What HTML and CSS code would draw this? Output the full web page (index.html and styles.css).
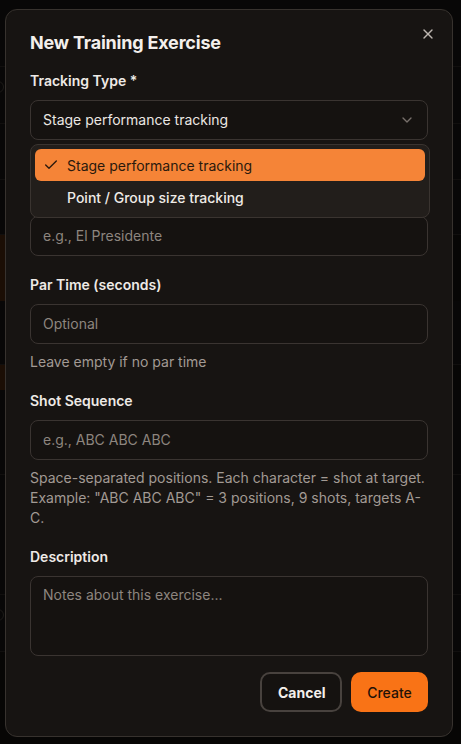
FILE: index.html
```html
<!DOCTYPE html>
<html lang="en">
<head>
<meta charset="utf-8">
<title>New Training Exercise</title>
<link rel="stylesheet" href="styles.css">
</head>
<body>
<div class="page">
  <div class="bg-row h67"></div>
  <div class="bg-row h57"><span class="bg-ring"></span></div>
  <div class="bg-row h56"></div>
  <div class="bg-row h55"></div>
  <div class="bg-row bg-card h66"></div>
  <div class="bg-row h64"></div>
  <div class="bg-row bg-card h25"></div>
  <div class="bg-row h85"></div>
  <div class="bg-row h120"></div>
  <div class="bg-row h57"><span class="bg-ring"></span></div>
</div>

<div class="overlay"></div>

<div class="modal" role="dialog" aria-labelledby="modal-title">
  <button class="close" aria-label="Close">
    <svg width="16" height="16" viewBox="0 0 24 24" fill="none" stroke="currentColor" stroke-width="2" stroke-linecap="round" stroke-linejoin="round"><path d="M18 6 6 18"/><path d="m6 6 12 12"/></svg>
  </button>
  <h2 class="title" id="modal-title">New Training Exercise</h2>

  <div class="form">
    <div class="field">
      <label class="label">Tracking Type *</label>
      <div class="select-wrap">
        <div class="control select">
          <span>Stage performance tracking</span>
          <svg class="chev" width="16" height="16" viewBox="0 0 24 24" fill="none" stroke="currentColor" stroke-width="2" stroke-linecap="round" stroke-linejoin="round"><path d="m6 9 6 6 6-6"/></svg>
        </div>
        <div class="menu">
          <div class="item active">
            <svg class="check" width="16" height="16" viewBox="0 0 24 24" fill="none" stroke="currentColor" stroke-width="2" stroke-linecap="round" stroke-linejoin="round"><path d="M20 6 9 17l-5-5"/></svg>
            <span>Stage performance tracking</span>
          </div>
          <div class="item">
            <span class="icon-space"></span>
            <span>Point / Group size tracking</span>
          </div>
        </div>
      </div>
      <div class="help-space"></div>
    </div>

    <div class="field">
      <div class="label-space"></div>
      <div class="control"><span class="ph">e.g., El Presidente</span></div>
    </div>

    <div class="field">
      <label class="label">Par Time (seconds)</label>
      <div class="control"><span class="ph">Optional</span></div>
      <p class="help">Leave empty if no par time</p>
    </div>

    <div class="field">
      <label class="label">Shot Sequence</label>
      <div class="control"><span class="ph">e.g., ABC ABC ABC</span></div>
      <p class="help">Space-separated positions. Each character = shot at target. Example: "ABC ABC ABC" = 3 positions, 9 shots, targets A-C.</p>
    </div>

    <div class="field">
      <label class="label">Description</label>
      <div class="control textarea"><span class="ph">Notes about this exercise...</span></div>
    </div>
  </div>

  <div class="actions">
    <button class="btn btn-outline">Cancel</button>
    <button class="btn btn-primary">Create</button>
  </div>
</div>
</body>
</html>
```

FILE: styles.css
```css
* { box-sizing: border-box; }

html, body {
  margin: 0;
  padding: 0;
}

body {
  width: 461px;
  height: 744px;
  overflow: hidden;
  background: #0b0a09;
  font-family: Inter, "Noto Sans", "Liberation Sans", sans-serif;
  color: #ede9e5;
}

/* faint page under the overlay */
.page {
  display: flex;
  flex-direction: column;
  width: 100%;
}
.bg-row {
  position: relative;
  width: 100%;
  background: #0d0c0b;
  border-bottom: 1px solid #1b1816;
}
.h67 { height: 67px; }
.h57 { height: 57px; }
.h56 { height: 56px; }
.h55 { height: 55px; }
.h66 { height: 66px; }
.h64 { height: 64px; }
.h25 { height: 25px; }
.h85 { height: 85px; }
.h120 { height: 120px; }
.bg-card {
  width: 200px;
  background: #2a1608;
  border-bottom: 0;
}
.bg-ring {
  position: absolute;
  left: -8px;
  top: 14px;
  width: 12px;
  height: 12px;
  border: 1px solid #2c2825;
  border-radius: 50%;
}

.overlay {
  position: fixed;
  inset: 0;
  background: rgba(0, 0, 0, 0.35);
}

.modal {
  position: fixed;
  left: 5px;
  top: 9px;
  width: 448px;
  height: 728px;
  padding: 24px;
  background: #171412;
  border: 1px solid #37322e;
  border-radius: 12px;
  display: flex;
  flex-direction: column;
}

.close {
  position: absolute;
  top: 16px;
  right: 16px;
  width: 16px;
  height: 16px;
  padding: 0;
  border: 0;
  background: none;
  color: #bdb6b0;
  display: flex;
}

.title {
  margin: 0;
  font-size: 18px;
  line-height: 18px;
  font-weight: 700;
  letter-spacing: -0.2px;
  color: #f3efeb;
}

.form {
  margin-top: 19px;
  display: flex;
  flex-direction: column;
  gap: 19px;
}

.field {
  display: flex;
  flex-direction: column;
}

.label {
  font-size: 14px;
  line-height: 20px;
  font-weight: 600;
  color: #eeeae6;
  margin-bottom: 9px;
}

.label-space {
  height: 20px;
  margin-bottom: 9px;
}

.help-space {
  height: 20px;
  margin-top: 8px;
}

.control {
  height: 40px;
  border: 1px solid #3a3431;
  border-radius: 8px;
  background: #151210;
  padding: 0 12px;
  display: flex;
  align-items: center;
  font-size: 14px;
  line-height: 20px;
  color: #ebe7e3;
}

.control.textarea {
  height: 80px;
  align-items: flex-start;
  padding-top: 8px;
}

.ph { color: #8d857f; }

.select { justify-content: space-between; }
.chev { color: #77706b; }

.select-wrap { position: relative; }

.menu {
  position: absolute;
  top: calc(100% + 4px);
  left: 0;
  width: 400px;
  padding: 4px;
  background: #221e1b;
  border: 1px solid #3a3430;
  border-radius: 8px;
  display: flex;
  flex-direction: column;
  z-index: 2;
}

.item {
  height: 32px;
  border-radius: 6px;
  padding: 0 8px;
  display: flex;
  align-items: center;
  gap: 8px;
  font-size: 14px;
  font-weight: 500;
  color: #efebe7;
}
.item.active {
  background: #f58437;
  color: #2a190d;
  font-weight: 400;
}
.check { flex: none; }
.icon-space { width: 16px; flex: none; }

.help {
  margin: 8px 0 0;
  font-size: 14px;
  line-height: 20px;
  color: #a29a94;
}

.actions {
  margin-top: 16px;
  display: flex;
  justify-content: flex-end;
  gap: 9px;
}

.btn {
  height: 40px;
  border-radius: 10px;
  font-family: inherit;
  font-size: 14px;
  font-weight: 700;
  padding: 0 16px;
}
.btn-outline {
  width: 82px;
  background: #151210;
  border: 2px solid #48423e;
  color: #f3efeb;
}
.btn-primary {
  width: 77px;
  background: #f97316;
  border: 0;
  color: #1f1208;
  font-weight: 500;
}
```
